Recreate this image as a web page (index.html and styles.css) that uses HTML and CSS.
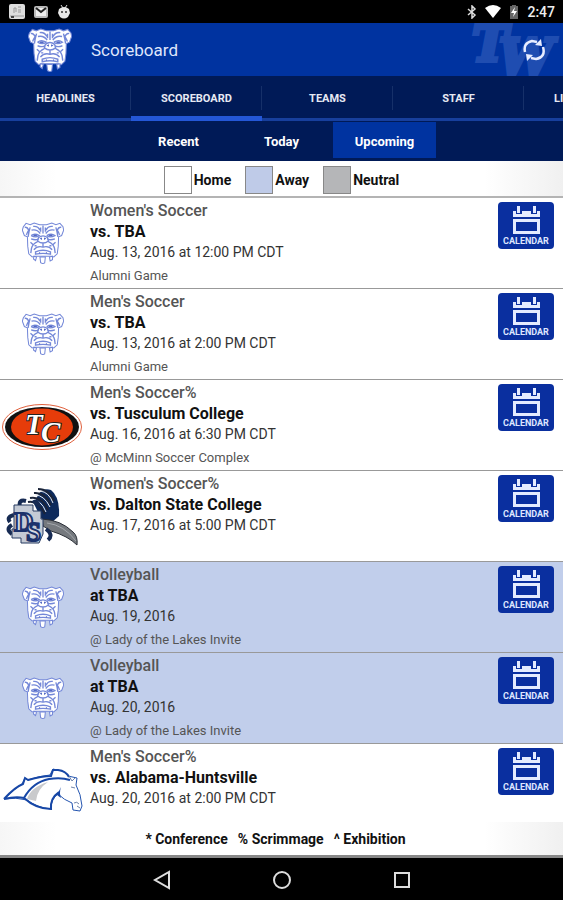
FILE: index.html
```html
<!DOCTYPE html>
<html lang="en">
<head>
    <meta charset="UTF-8">
    <meta name="viewport" content="width=device-width, initial-scale=1.0">
    <title>Scoreboard</title>
    <link rel="stylesheet" href="styles.css">
</head>
<body>
    <!-- Shared icons -->
    <svg class="sprite" aria-hidden="true">
        <symbol id="bulldog" viewBox="0 0 124 124">
            <path class="face" d="M24 8 L36 3 L52 8 L72 8 L88 3 L100 8 L112 4 L121 14 L123 24 L117 40 L108 44 L107 72 L104 94 L94 103 L86 101 L38 101 L30 103 L20 94 L17 72 L16 44 L7 40 L1 24 L4 14 L12 4 Z"/>
            <path class="face" d="M35 101 l8 2 -3 11 -6 -5 Z M53 103 l16 0 -2 18 -6 2 -6 -3 Z M81 103 l9 -2 0 10 -7 4 Z"/>
            <path class="line" d="M8 16 q7 -3 12 8 q-5 8 -7 14 M116 16 q-7 -3 -12 8 q5 8 7 14 M24 16 q-4 14 -6 28 M100 16 q4 14 6 28"/>
            <path class="line" d="M33 13 q14 -2 20 11 M91 13 q-14 -2 -20 11 M28 24 q16 -4 26 10 M96 24 q-16 -4 -26 10 M62 10 v24 M55 16 v13 M69 16 v13"/>
            <path class="line" d="M27 40 q10 -8 24 0 q-10 8 -24 0 M73 40 q14 -8 24 0 q-14 8 -24 0 M27 50 q14 5 21 0 M97 50 q-14 5 -21 0"/>
            <path class="line" d="M49 46 q13 -10 26 0 l3 10 q-16 12 -32 0 Z M62 62 v12 M46 58 q-16 8 -18 20 l-2 14 M78 58 q16 8 18 20 l2 14"/>
            <path class="line" d="M35 82 q10 -13 27 -8 q17 -5 27 8 M40 88 q22 -9 44 0 v7 q-22 -5 -44 0 Z M25 60 l8 7 M99 60 l-8 7 M37 70 h6 M81 70 h6"/>
            <path class="dark" d="M52 49 l7 -3 0 7 Z M72 49 l-7 -3 0 7 Z M34 38 h10 v4 h-10 Z M80 38 h10 v4 h-10 Z M50 89 l4 0 -2 5 Z M70 89 l4 0 -2 5 Z"/>
        </symbol>
        <symbol id="calendar" viewBox="0 0 27 30">
            <path fill="#e4ebff" d="M0 6 H3 V9 H9 V6 H18 V9 H24 V6 H27 V12 H0 Z"/>
            <path fill="#e4ebff" d="M4 1 H7 V8 H4 Z M20 1 H23 V8 H20 Z"/>
            <path fill="#e4ebff" fill-rule="evenodd" d="M0 14 H27 V29 H0 Z M3 17 V26 H24 V17 Z"/>
        </symbol>
    </svg>

    <div class="status-bar">
        <div class="status-group">
            <svg width="16" height="16" viewBox="0 0 16 16"><rect width="16" height="15" rx="2" fill="#ddd"/><path d="M5 9 V4 h2 v4 M9 3 h3 M9 6 h3 M9 8 h3" stroke="#999" fill="none"/><path d="M1 12 h14" stroke="#999"/><rect x="2" y="12" width="3" height="2" fill="#444"/></svg>
            <svg width="16" height="16" viewBox="0 0 16 16"><rect x="1" y="2" width="14" height="12" rx="2" fill="#bbb"/><rect x="3" y="4" width="10" height="8" fill="#eee"/><path d="M3 4 l5 4 5 -4" stroke="#222" stroke-width="2" fill="none"/></svg>
            <svg width="14" height="16" viewBox="0 0 14 16"><path d="M4 1 l2 3 M10 1 l-2 3" stroke="#ddd"/><path d="M2 5 q5 -4 10 0 l1 4 -2 4 q-4 3 -8 0 l-2 -4 Z" fill="#e8e8e8"/><circle cx="5" cy="8" r="1" fill="#333"/><circle cx="9" cy="8" r="1" fill="#333"/></svg>
        </div>
        <div class="status-group">
            <svg width="10" height="14" viewBox="0 0 10 14"><path d="M1 4 L8 10 L5 13 V1 L8 4 L1 10" stroke="#ddd" stroke-width="1.5" fill="none"/></svg>
            <svg width="16" height="13" viewBox="0 0 16 13"><path d="M0 3 Q8 -3 16 3 L8 13 Z" fill="#fff"/></svg>
            <svg width="10" height="14" viewBox="0 0 10 14"><path d="M3 0 h4 v1 h2 v13 h-8 V1 h2 Z" fill="#666"/><path d="M6 2 L2 8 h3 L4 12 L8 6 H5 Z" fill="#fff"/></svg>
            <span class="clock">2:47</span>
        </div>
    </div>

    <header class="app-bar">
        <svg class="app-logo" role="img" aria-label="Bulldogs"><use href="#bulldog"/></svg>
        <h1>Scoreboard</h1>
        <svg class="watermark" viewBox="0 0 94 54" aria-hidden="true">
            <text x="3" y="38" class="watermark-letter">T</text>
            <text x="30" y="51" class="watermark-letter">W</text>
        </svg>
        <button class="refresh" aria-label="Refresh">
            <svg width="22" height="24" viewBox="0 0 22 24">
                <path d="M2 14 Q0 5 9 3 L14 4 M20 9 Q23 19 13 21 L8 20" stroke="#e8edff" stroke-width="2.5" fill="none"/>
                <path d="M12 7 L19 8 L18 1 Z M10 17 L3 16 L4 23 Z" fill="#e8edff"/>
            </svg>
        </button>
    </header>

    <nav class="tabs">
        <a href="#">HEADLINES</a>
        <a href="#" class="active">SCOREBOARD</a>
        <a href="#">TEAMS</a>
        <a href="#">STAFF</a>
        <a href="#">LIVE RESULTS</a>
    </nav>

    <div class="filters">
        <button>Recent</button>
        <button>Today</button>
        <button class="active">Upcoming</button>
    </div>

    <div class="legend">
        <span class="legend-item"><i class="swatch home"></i>Home</span>
        <span class="legend-item"><i class="swatch away"></i>Away</span>
        <span class="legend-item"><i class="swatch neutral"></i>Neutral</span>
    </div>

    <main class="games">
        <article class="game">
            <svg class="team-dog"><use href="#bulldog"/></svg>
            <div class="details">
                <h2>Women's Soccer</h2>
                <h3>vs. TBA</h3>
                <p>Aug. 13, 2016 at 12:00 PM CDT</p>
                <p class="note">Alumni Game</p>
            </div>
            <button class="calendar"><svg width="27" height="30"><use href="#calendar"/></svg>CALENDAR</button>
        </article>
        <article class="game">
            <svg class="team-dog"><use href="#bulldog"/></svg>
            <div class="details">
                <h2>Men's Soccer</h2>
                <h3>vs. TBA</h3>
                <p>Aug. 13, 2016 at 2:00 PM CDT</p>
                <p class="note">Alumni Game</p>
            </div>
            <button class="calendar"><svg width="27" height="30"><use href="#calendar"/></svg>CALENDAR</button>
        </article>
        <article class="game">
            <svg class="team-logo" viewBox="0 0 85 64">
                <ellipse cx="42" cy="33" rx="39.5" ry="22.5" fill="#fff" stroke="#e0603c"/>
                <ellipse cx="42" cy="33" rx="37" ry="20" fill="#111"/>
                <ellipse cx="42" cy="33" rx="31" ry="18.5" fill="#e63c0a"/>
                <text x="25" y="40" class="tc-letter">T</text>
                <text x="41" y="48" class="tc-letter">C</text>
            </svg>
            <div class="details">
                <h2>Men's Soccer%</h2>
                <h3>vs. Tusculum College</h3>
                <p>Aug. 16, 2016 at 6:30 PM CDT</p>
                <p class="note">@ McMinn Soccer Complex</p>
            </div>
            <button class="calendar"><svg width="27" height="30"><use href="#calendar"/></svg>CALENDAR</button>
        </article>
        <article class="game">
            <svg class="team-logo" viewBox="0 0 85 64">
                <path d="M38 10 Q43 2 51 5 Q60 12 59 31 L50 39 L41 33 L34 19 Z" fill="#0d2a5c"/>
                <path d="M38 4 Q49 4 54 16 M34 8 Q45 7 51 20 M30 13 Q42 11 48 25 M28 17 Q38 15 45 29" stroke="#1b2438" stroke-width="2" fill="none"/>
                <path d="M40 6 Q49 7 53 18 M35 10 Q44 10 50 22 M31 15 Q41 14 46 27" stroke="#e9edf4" fill="none"/>
                <path d="M42 34 Q61 35 73 47 Q78 51 77 60 Q68 51 51 46 L43 41 Z" fill="#75797e" stroke="#292e36"/>
                <path d="M47 38 Q64 40 76 56" stroke="#a3a7ac" fill="none"/>
                <path d="M20 22 q-2 -8 6 -6 M39 22 q-2 -8 -6 -4 M14 30 q-8 2 -4 7 M12 40 q-7 4 0 9 M46 44 q8 6 2 11" stroke="#172b53" stroke-width="4" fill="none"/>
                <path d="M14 20 h19 v6 h8 v8 h2 v15 l-4 9 h-18 v-5 h-9 v-9 h2 Z" fill="#c4cad5" stroke="#273a61"/>
                <text x="14" y="46" class="ds-letter">D</text>
                <text x="26" y="56" class="ds-letter">S</text>
            </svg>
            <div class="details">
                <h2>Women's Soccer%</h2>
                <h3>vs. Dalton State College</h3>
                <p>Aug. 17, 2016 at 5:00 PM CDT</p>
            </div>
            <button class="calendar"><svg width="27" height="30"><use href="#calendar"/></svg>CALENDAR</button>
        </article>
        <article class="game away">
            <svg class="team-dog"><use href="#bulldog"/></svg>
            <div class="details">
                <h2>Volleyball</h2>
                <h3>at TBA</h3>
                <p>Aug. 19, 2016</p>
                <p class="note">@ Lady of the Lakes Invite</p>
            </div>
            <button class="calendar"><svg width="27" height="30"><use href="#calendar"/></svg>CALENDAR</button>
        </article>
        <article class="game away">
            <svg class="team-dog"><use href="#bulldog"/></svg>
            <div class="details">
                <h2>Volleyball</h2>
                <h3>at TBA</h3>
                <p>Aug. 20, 2016</p>
                <p class="note">@ Lady of the Lakes Invite</p>
            </div>
            <button class="calendar"><svg width="27" height="30"><use href="#calendar"/></svg>CALENDAR</button>
        </article>
        <article class="game">
            <svg class="team-logo" viewBox="0 0 85 64">
                <path d="M4 41 Q14 31 22 26 L25 20 L28 22 Q39 18 50 17 L53 11 L57 12 Q66 13 68 18 L77 20 L76 27 Q81 36 82 48 L80 53 L73 52 L72 45 Q64 42 58 36 Q51 41 51 51 Q38 50 27 42 Q16 39 4 41 Z" fill="#fff" stroke="#2455b0"/>
                <path d="M4 41 Q15 29 23 26 L25 20 L28 22 Q42 18 51 18 L53 12 L58 12 Q66 13 69 19 M4 41 Q16 38 24 40 Q33 24 49 21 Q61 19 70 22 M24 40 Q36 51 51 51 Q50 40 59 34" stroke="#1747a6" stroke-width="2" fill="none"/>
                <path d="M27 41 Q31 29 48 24 Q37 31 36 43 Z" fill="#c9cacc"/>
                <path d="M61 29 Q59 35 61 40 L57 37 Z" fill="#1747a6"/>
                <path d="M69 18 l3 5 3 -3 M71 29 l4 1 M77 48 l3 2 M74 45 q3 -2 5 1" stroke="#7085ac" fill="none"/>
            </svg>
            <div class="details">
                <h2>Men's Soccer%</h2>
                <h3>vs. Alabama-Huntsville</h3>
                <p>Aug. 20, 2016 at 2:00 PM CDT</p>
            </div>
            <button class="calendar"><svg width="27" height="30"><use href="#calendar"/></svg>CALENDAR</button>
        </article>
    </main>

    <footer class="key">
        <span>* Conference</span>
        <span>% Scrimmage</span>
        <span>^ Exhibition</span>
    </footer>

    <div class="nav-bar">
        <button aria-label="Back"><svg width="20" height="20" viewBox="0 0 20 20"><path d="M17 2 V18 L3 10 Z"/></svg></button>
        <button aria-label="Home"><svg width="20" height="20" viewBox="0 0 20 20"><circle cx="10" cy="10" r="8"/></svg></button>
        <button aria-label="Recent apps"><svg width="20" height="20" viewBox="0 0 20 20"><rect x="3" y="3" width="14" height="14"/></svg></button>
    </div>
</body>
</html>
```
FILE: styles.css
```css
* {
    box-sizing: border-box;
}
body {
    margin: 0;
    min-height: 100vh;
    display: flex;
    flex-direction: column;
    font-family: Roboto, Arial, sans-serif;
    background: white;
    color: #111;
}
h1, h2, h3, p {
    margin: 0;
}
button {
    padding: 0;
    border: none;
    background: none;
    font-family: inherit;
    cursor: pointer;
}
.sprite {
    display: none;
}

/* Android status bar */
.status-bar {
    height: 23px;
    padding: 0 8px 0 9px;
    display: flex;
    justify-content: space-between;
    align-items: center;
    background: black;
}
.status-group {
    display: flex;
    align-items: center;
    gap: 8px;
}
.clock {
    color: #eee;
    font-size: 14px;
    font-weight: 500;
}

/* Header */
.app-bar {
    position: relative;
    height: 53px;
    padding: 0 18px 0 28px;
    display: flex;
    align-items: center;
    background: #0033a0;
    overflow: hidden;
}
.app-logo {
    width: 44px;
    height: 44px;
    margin-right: 19px;
}
.app-bar h1 {
    flex: 1;
    color: #dfe6fb;
    font-size: 17px;
    font-weight: 400;
}
.watermark {
    position: absolute;
    right: 0;
    top: 0;
    width: 94px;
    height: 54px;
}
.watermark-letter {
    font-family: "DejaVu Serif", serif;
    font-size: 48px;
    font-weight: bold;
    font-style: italic;
    fill: #1f4db1;
    stroke: #1f4db1;
    stroke-width: 4;
}
.refresh {
    position: relative;
    display: flex;
}
.face {
    fill: white;
    stroke: #7488d8;
    stroke-width: 3;
}
.line {
    fill: none;
    stroke: #7488d8;
    stroke-width: 4;
}
.dark {
    fill: #5369c4;
}

/* Main tabs */
.tabs {
    height: 45px;
    display: flex;
    overflow: hidden;
    background: #001a57;
}
.tabs a {
    flex: 0 0 131px;
    padding-top: 2px;
    display: flex;
    align-items: center;
    justify-content: center;
    border-bottom: 3px solid #173f9c;
    background: linear-gradient(#163069, #163069) right 10px / 1px 24px no-repeat;
    color: #e6e9f3;
    font-size: 11px;
    font-weight: 700;
    text-decoration: none;
}
.tabs a.active {
    padding-top: 4px;
    border-bottom: 5px solid #2457d6;
}
.filters {
    height: 40px;
    padding: 1px 0 3px;
    display: flex;
    justify-content: center;
    background: #001a57;
}
.filters button {
    width: 103px;
    padding-top: 2px;
    color: white;
    font-size: 13px;
    font-weight: 700;
}
.filters button.active {
    background: #0033a0;
}

/* Colour legend */
.legend {
    height: 37px;
    padding-top: 3px;
    display: flex;
    justify-content: center;
    align-items: center;
    gap: 14px;
    border-bottom: 2px solid #b4b4b4;
    background: linear-gradient(90deg, #f6f6f6, white 10%, white 86%, #f0f0f0);
    font-size: 14px;
    font-weight: 700;
}
.legend-item {
    display: flex;
    align-items: center;
    gap: 2px;
}
.swatch {
    width: 28px;
    height: 28px;
    border: 1px solid #888;
}
.home {
    background: white;
}
.swatch.away {
    background: #bfcbe8;
}
.neutral {
    background: #b5b6b8;
}

/* Game list */
.games {
    flex: 1;
}
.game {
    min-height: 91px;
    padding: 2px 9px 0 0;
    display: flex;
    align-items: flex-start;
    border-bottom: 1px solid #999;
}
.game:last-child {
    min-height: 76px;
    border-bottom: none;
}
.game.away {
    background: #c1ceeb;
}
.team-dog {
    flex: none;
    width: 42px;
    height: 42px;
    margin: 22px 26px 0 22px;
}
.team-logo {
    flex: none;
    width: 85px;
    height: 64px;
    margin: 12px 5px 0 0;
}
.details {
    flex: 1;
}
.details h2 {
    font-size: 16px;
    line-height: 21px;
    font-weight: 500;
    color: #555;
}
.details h3 {
    font-size: 16px;
    line-height: 21px;
    font-weight: 700;
    color: #111;
}
.details p {
    font-size: 14px;
    line-height: 20px;
    color: #333;
}
.details .note {
    margin-top: 5px;
    font-size: 13px;
    line-height: 18px;
    color: #555;
}
.calendar {
    width: 56px;
    height: 47px;
    margin-top: 2px;
    display: flex;
    flex-direction: column;
    align-items: center;
    justify-content: center;
    gap: 1px;
    border-radius: 4px;
    background: #0a2f9f;
    color: #dfe6ff;
    font-size: 9px;
    line-height: 10px;
    font-weight: 700;
}
.tc-letter {
    font-family: "Liberation Serif", serif;
    font-size: 29px;
    font-weight: bold;
    font-style: italic;
    fill: white;
    stroke: #222;
    stroke-width: 2;
    paint-order: stroke;
}
.ds-letter {
    font-family: "Liberation Serif", serif;
    font-size: 27px;
    font-weight: bold;
    fill: #d5dae3;
    stroke: #1c326b;
    stroke-width: 2;
}

/* Footer */
.key {
    height: 36px;
    padding-right: 12px;
    display: flex;
    justify-content: center;
    align-items: center;
    gap: 10px;
    border-bottom: 3px solid #888;
    background: linear-gradient(90deg, #f6f6f6, white 10%, white 86%, #f0f0f0);
    font-size: 14px;
    font-weight: 700;
}
.nav-bar {
    height: 44px;
    display: flex;
    justify-content: center;
    align-items: center;
    gap: 100px;
    background: black;
}
.nav-bar button {
    display: flex;
}
.nav-bar svg {
    fill: none;
    stroke: #ddd;
    stroke-width: 2;
}
```
